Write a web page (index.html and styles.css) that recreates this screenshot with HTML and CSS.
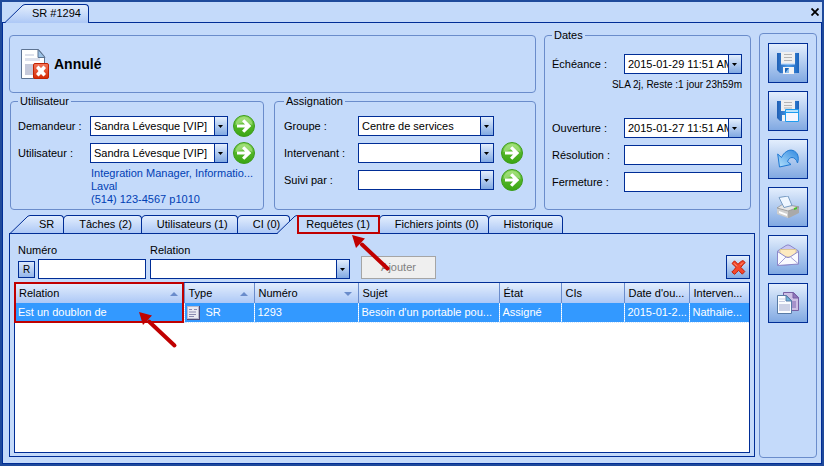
FILE: index.html
```
<!DOCTYPE html>
<html lang="fr">
<head>
    <meta charset="UTF-8">
    <meta name="viewport" content="width=device-width, initial-scale=1.0">
    <title>SR #1294</title>
    <link rel="stylesheet" href="styles.css">
</head>
<body>
    <!-- dégradés et icônes partagés -->
    <svg class="defs" width="0" height="0" aria-hidden="true">
        <defs>
            <linearGradient id="gTab" x1="0" y1="0" x2="0" y2="1">
                <stop offset="0" stop-color="#e3eefd"/>
                <stop offset="1" stop-color="#adc8f6"/>
            </linearGradient>
            <linearGradient id="gGreen" x1="0" y1="0" x2="0" y2="1">
                <stop offset="0" stop-color="#8fd860"/>
                <stop offset="0.5" stop-color="#52b528"/>
                <stop offset="1" stop-color="#3aa512"/>
            </linearGradient>
            <linearGradient id="gRed" x1="0" y1="0" x2="0" y2="1">
                <stop offset="0" stop-color="#f2785c"/>
                <stop offset="1" stop-color="#d52a04"/>
            </linearGradient>
            <linearGradient id="gBlue" x1="0" y1="0" x2="1" y2="0">
                <stop offset="0" stop-color="#1f5fb4"/>
                <stop offset="0.5" stop-color="#4d9be8"/>
                <stop offset="1" stop-color="#1b63bb"/>
            </linearGradient>
            <linearGradient id="gArrow" x1="0" y1="1" x2="1" y2="0">
                <stop offset="0" stop-color="#b5e2fc"/>
                <stop offset="1" stop-color="#3088e0"/>
            </linearGradient>
            <symbol id="go" viewBox="0 0 22 22">
                <circle cx="11" cy="11" r="10.5" fill="url(#gGreen)" stroke="#3c9c1c"/>
                <path d="M2.500 10a8.500 8 0 0 1 17 0q-8-4-17 0z" fill="#b9eb98" opacity="0.55"/>
                <path d="M4 9.500h8L9 6.300 11.300 4.200 18.300 11 11.300 17.800 9 15.700l3-3.200H4z" fill="#fff"/>
            </symbol>
            <symbol id="arrow" viewBox="0 0 40 38">
                <path d="M11 10.500L36.500 34.500" stroke="#c00000" stroke-width="4" stroke-linecap="round"/>
                <path d="M1 1L14 4.500 5 14z" fill="#c00000"/>
            </symbol>
        </defs>
    </svg>

    <div class="window">
        <div class="title">
            <button class="tab active" type="button">
                <svg class="slant" viewBox="0 0 20 19"><path d="M0 19L16 3Q18 .5 20 .5V19z" fill="url(#gTab)"/><path d="M0 18.500L16 3Q18 .5 20 .5" fill="none" stroke="#002d96"/></svg>
                <span>SR #1294</span>
            </button>
            <button class="close" type="button" aria-label="Fermer">
                <svg width="8" height="8" viewBox="0 0 8 8"><path d="M.5.5l7 7M7.500.5l-7 7" stroke="#000" stroke-width="1.800"/></svg>
            </button>
        </div>

        <div class="content">
            <div class="main">
                <div class="form">
                    <div class="left">
                        <div class="status">
                            <svg width="28" height="31" viewBox="0 0 28 31">
                                <path d="M.5.5h17l6 7v22H.5z" fill="#fff" stroke="#5d7391"/>
                                <path d="M17 .5v8h7z" fill="#9cc3e6" stroke="#5d7391"/>
                                <path d="M4 5h9v2H4zM4 9h15v3H4z" fill="#dde1ec"/>
                                <path d="M4 15h8v11H4z" fill="#c6cadb"/>
                                <rect x="12.500" y="14.500" width="15" height="15" rx="1.500" fill="url(#gRed)" stroke="#c22100"/>
                                <path d="M15 19l2.500-2.500L20 19l2.500-2.500L25 19l-2.500 3 2.500 3-2.500 2.500L20 25l-2.500 2.500L15 25l2.500-3z" fill="#fff"/>
                            </svg>
                            <strong>Annulé</strong>
                        </div>
                        <div class="boxes">
                            <fieldset class="box user">
                                <legend>Utilisateur</legend>
                                <div class="fields">
                                    <label for="demandeur">Demandeur :</label>
                                    <select id="demandeur"><option>Sandra Lévesque [VIP]</option></select>
                                    <button class="go" type="button" aria-label="Ouvrir le demandeur"><svg><use href="#go"/></svg></button>
                                    <label for="utilisateur">Utilisateur :</label>
                                    <select id="utilisateur"><option>Sandra Lévesque [VIP]</option></select>
                                    <button class="go" type="button" aria-label="Ouvrir l'utilisateur"><svg><use href="#go"/></svg></button>
                                </div>
                                <div class="contact">
                                    <div>Integration Manager, Informatio...</div>
                                    <div>Laval</div>
                                    <div>(514) 123-4567 p1010</div>
                                </div>
                            </fieldset>
                            <fieldset class="box assign">
                                <legend>Assignation</legend>
                                <div class="fields">
                                    <label for="groupe">Groupe :</label>
                                    <select id="groupe"><option>Centre de services</option></select>
                                    <span></span>
                                    <label for="intervenant">Intervenant :</label>
                                    <select id="intervenant"><option></option></select>
                                    <button class="go" type="button" aria-label="Ouvrir l'intervenant"><svg><use href="#go"/></svg></button>
                                    <label for="suivi">Suivi par :</label>
                                    <select id="suivi"><option></option></select>
                                    <button class="go" type="button" aria-label="Ouvrir le suivi"><svg><use href="#go"/></svg></button>
                                </div>
                            </fieldset>
                        </div>
                    </div>
                    <fieldset class="box dates">
                        <legend>Dates</legend>
                        <div class="fields">
                            <label for="echeance">Échéance :</label>
                            <select id="echeance"><option>2015-01-29 11:51 AM</option></select>
                        </div>
                        <p class="sla">SLA 2j, Reste :1 jour 23h59m</p>
                        <div class="fields">
                            <label for="ouverture">Ouverture :</label>
                            <select id="ouverture"><option>2015-01-27 11:51 AM</option></select>
                            <label for="resolution">Résolution :</label>
                            <input id="resolution" type="text">
                            <label for="fermeture">Fermeture :</label>
                            <input id="fermeture" type="text">
                        </div>
                    </fieldset>
                </div>

                <div class="tabs">
                    <button class="tab first" type="button">
                        <svg class="slant" viewBox="0 0 20 19"><path d="M0 18L16 3Q18 .5 20 .5V18z" fill="url(#gTab)"/><path d="M0 18.500L16 3Q18 .5 20 .5" fill="none" stroke="#002d96"/></svg>
                        <span>SR</span>
                    </button>
                    <button class="tab" type="button"><span>Tâches (2)</span></button>
                    <button class="tab" type="button"><span>Utilisateurs (1)</span></button>
                    <button class="tab" type="button"><span>CI (0)</span></button>
                    <button class="tab active" type="button">
                        <svg class="slant" viewBox="0 0 20 19"><path d="M0 19L16 3Q18 .5 20 .5V19z" fill="#c4dafa"/><path d="M0 18.500L16 3Q18 .5 20 .5" fill="none" stroke="#002d96"/></svg>
                        <span class="marked">Requêtes (1)</span>
                        <svg class="pointer"><use href="#arrow"/></svg>
                    </button>
                    <button class="tab" type="button"><span>Fichiers joints (0)</span></button>
                    <button class="tab" type="button"><span>Historique</span></button>
                </div>

                <div class="panel">
                    <div class="toolbar">
                        <div class="field">
                            <label for="numero">Numéro</label>
                            <div class="number">
                                <button class="small" type="button">R</button>
                                <input id="numero" type="text">
                            </div>
                        </div>
                        <div class="field relation">
                            <label for="relation">Relation</label>
                            <select id="relation"><option></option></select>
                        </div>
                        <button class="add" type="button" disabled>Ajouter</button>
                        <button class="delete" type="button" aria-label="Supprimer">
                            <svg width="15" height="15" viewBox="0 0 15 15"><path d="M1 3.500L3.500.8 7 4.300C8.500 2.500 10 1.200 12 .6L14.200 2.500C12.500 4 11 5.800 9.800 7.300L13.800 11.500 11.300 14.200 7.500 10.300C6.200 12 5 13.300 3.500 14.300L.8 12C2.500 10.500 4 8.800 5 7.300z" fill="#f5482c" stroke="#c02008"/><path d="M3 3.300l3 3M9.500 5L12 2.500" stroke="#ff9a7c"/></svg>
                        </button>
                    </div>
                    <div class="grid">
                        <table>
                            <thead>
                                <tr>
                                    <th class="c-rel up">Relation</th>
                                    <th class="c-type up">Type</th>
                                    <th class="c-num down">Numéro</th>
                                    <th>Sujet</th>
                                    <th class="c-etat">État</th>
                                    <th class="c-cis">CIs</th>
                                    <th class="c-date">Date d'ou...</th>
                                    <th class="c-int">Interven...</th>
                                </tr>
                            </thead>
                            <tbody>
                                <tr>
                                    <td>Est un doublon de</td>
                                    <td class="type"><svg width="13" height="14" viewBox="0 0 13 14"><path d="M0 0h13v14H0z" fill="#4d4b78"/><path d="M0 0h12v13H0z" fill="#b8b8cc"/><path d="M1 1h10v11H1z" fill="#e9e9f2"/><path d="M2 3.500h3M2 6h7M2 8.500h7M2 10.500h5M7 3.500h3" stroke="#8a8ab0"/></svg>SR</td>
                                    <td>1293</td>
                                    <td>Besoin d'un portable pou...</td>
                                    <td>Assigné</td>
                                    <td></td>
                                    <td>2015-01-2...</td>
                                    <td>Nathalie...</td>
                                </tr>
                            </tbody>
                        </table>
                        <div class="frame"></div>
                        <svg class="pointer"><use href="#arrow"/></svg>
                    </div>
                </div>
            </div>

            <div class="sidebar">
                <button type="button" aria-label="Enregistrer">
                    <svg viewBox="0 0 22 22"><path d="M0 1h22v20H3l-3-3z" fill="url(#gBlue)"/><path d="M4 0h14v11H4z" fill="#f0f0f0"/><path d="M7 2.500h8M7 5.500h8M7 8.500h8" stroke="#b4b4b4"/><path d="M4 11h14v1.500H4z" fill="#cfe3fa"/><path d="M6 15h11v7H6z" fill="#f4f4f4"/><path d="M8 16h4v5H8z" fill="#1d65b8"/><path d="M8 21l4-5v5z" fill="#8ec0ee"/></svg>
                </button>
                <button type="button" aria-label="Enregistrer et fermer">
                    <svg viewBox="0 0 22 22"><path d="M0 1h22v20H3l-3-3z" fill="url(#gBlue)"/><path d="M4 0h14v11H4z" fill="#f0f0f0"/><path d="M7 2.500h8M7 5.500h8M7 8h8" stroke="#b4b4b4"/><path d="M5 15h3v6H5z" fill="#f4f4f4"/><path d="M8.500 9.500h13v12h-13z" fill="#f5f6ff" stroke="#1e9cf0"/><path d="M9 10h12v2.500H9z" fill="#b8e2fd"/><path d="M9 12.500h12" stroke="#1e9cf0"/></svg>
                </button>
                <button type="button" aria-label="Annuler">
                    <svg viewBox="0 0 22 22"><path d="M.7 6L4.500 9.500C7 4 12 1 16 2.500c4.500 1.500 6.500 6.500 4.500 12.500-1-3.500-3-5.500-5.500-5.500-2 0-3.500 1.500-4.500 4L14 16.500 2.500 19z" fill="url(#gArrow)" stroke="#1f78d2"/></svg>
                </button>
                <button type="button" aria-label="Imprimer">
                    <svg viewBox="0 0 22 22"><path d="M0 12l5-3 16 1 1 2v5l-10 5L0 18z" fill="#a9a9a9"/><path d="M0 12l6-4 16 3-11 4z" fill="#e6e6e6" stroke="#8c8c8c" stroke-width=".7"/><path d="M0 12.500l11 3v6.500L0 18z" fill="#cfcfcf"/><path d="M2 15l8 3v2l-8-3z" fill="#fff"/><path d="M2 1.500L11 0l4 9.500-8 2z" fill="#eef6ff" stroke="#779bc2"/><path d="M17 12l3-1v2l-3 1z" fill="#46c228"/></svg>
                </button>
                <button type="button" aria-label="Envoyer">
                    <svg viewBox="0 0 22 22"><path d="M.5 7L9 1.500Q11 .3 13 1.500L21.500 7v13L.5 21.500z" fill="#c9c6f1" stroke="#8b88c9"/><path d="M3 5.500h16V13H3z" fill="#fdeac0" stroke="#dcc694"/><path d="M.5 7.500L9 13q2 1 4 0l8.500-5.500V20L.5 21.500z" fill="#fafaff" stroke="#8b88c9"/><path d="M1 21l8-8M21 19.500L13.500 13" stroke="#a3a0d6" fill="none"/></svg>
                </button>
                <button type="button" aria-label="Copier">
                    <svg viewBox="0 0 22 22"><path d="M6.500.5h10l5 5v13h-15z" fill="#cdbfe4" stroke="#775fa3"/><path d="M16 .5v5.500h5.500z" fill="#9277bb" stroke="#775fa3"/><path d="M12 9h7v7h-7z" fill="#a692ca"/><path d="M.5 3.500h9l5 5v13H.5z" fill="#fbfdff" stroke="#587ba6"/><path d="M9 3.500V9h5.500z" fill="#6bb4dc" stroke="#587ba6"/><path d="M2 7h6M2 9.500h6" stroke="#c7cde3"/><path d="M2 12h11v7H2z" fill="#cdd2e6"/></svg>
                </button>
            </div>
        </div>
    </div>
</body>
</html>
```

FILE: styles.css
```
* {
    margin: 0;
    padding: 0;
    box-sizing: border-box;
}

body {
    font-family: "Liberation Sans", Arial, sans-serif;
    font-size: 11px;
    line-height: 13px;
    color: #000;
}

button,
input,
select {
    font: inherit;
    color: inherit;
    border-radius: 0;
}

.defs {
    position: absolute;
}

.window {
    display: flex;
    flex-direction: column;
    min-height: 100vh;
    border: 2px solid #1f4a9b;
    background: #c4dafa;
}

/* barre de titre */
.title {
    display: flex;
    align-items: flex-end;
    height: 20px;
    padding: 0 3px;
}

.close {
    margin: 0 0 6px auto;
    width: 8px;
    height: 8px;
    border: 0;
    background: none;
}

.close svg {
    display: block;
}

/* onglets */
.tab {
    display: flex;
    height: 18px;
    margin-left: -1px;
    border: 0;
    background: none;
    white-space: nowrap;
}

.tab span {
    height: 100%;
    padding: 2px 9px 0 15px;
    border: 1px solid #002d96;
    border-bottom: 0;
    border-radius: 5px 4px 0 0;
    background: linear-gradient(#e3eefd, #adc8f6);
}

.slant {
    flex: none;
    display: block;
    width: 20px;
    height: 19px;
}

.slant + span {
    padding-left: 9px;
    border-left: 0;
    border-top-left-radius: 0;
}

.tab.active {
    position: relative;
    height: 19px;
    margin-bottom: -1px;
}

.title .tab.active {
    margin-left: 0;
}

.title .tab span {
    padding: 2px 7px 0 7px;
}

/* formulaire */
.content {
    flex: 1;
    display: flex;
    gap: 4px;
    padding: 6px 4px 5px 6px;
    border: 1px solid #002d96;
}

.main {
    flex: 1;
    min-width: 0;
    display: flex;
    flex-direction: column;
    padding-bottom: 1px;
}

.form {
    display: grid;
    grid-template-columns: 1fr 207px;
    gap: 8px;
    padding-right: 4px;
}

.status {
    display: flex;
    align-items: center;
    gap: 5px;
    height: 58px;
    margin: 6px 0 2px;
    padding: 0 11px;
    border: 1px solid #6a8ccb;
    border-radius: 4px;
}

.status strong {
    font-size: 14px;
    line-height: 16px;
}

.boxes {
    display: grid;
    grid-template-columns: 254fr 262fr;
    gap: 10px;
    padding-left: 1px;
}

.box {
    min-width: 0;
    border: 1px solid #6a8ccb;
    border-radius: 4px;
}

.box legend {
    padding: 0 2px;
    line-height: 13px;
}

.fields {
    display: grid;
    grid-template-columns: 67px 1fr 22px;
    gap: 5px;
    align-items: center;
}

.fields label {
    white-space: nowrap;
}

.user {
    padding: 7px 8px 3px 7px;
}

.assign {
    padding: 7px 12px 3px 9px;
}

.assign .fields {
    column-gap: 7px;
    grid-auto-rows: 22px;
}

.dates {
    padding: 12px 8px 12px 7px;
}

.dates .fields {
    grid-template-columns: 67px 1fr;
    row-gap: 7px;
}

.sla {
    padding: 4px 0 27px;
    font-size: 10px;
    text-align: right;
    white-space: nowrap;
}

.contact {
    margin: 3px 0 0 73px;
    color: #0040b4;
    white-space: nowrap;
}

select,
input {
    display: block;
    width: 100%;
    min-width: 0;
    height: 20px;
    padding: 0 3px;
    border: 1px solid #002d96;
    background: #fff;
}

select {
    appearance: none;
    padding-right: 13px;
    background: #fff url("data:image/svg+xml,%3Csvg xmlns='http://www.w3.org/2000/svg' width='13' height='18'%3E%3ClinearGradient id='g' x2='0' y2='1'%3E%3Cstop stop-color='%23e3eefd'/%3E%3Cstop offset='1' stop-color='%2381a9e2'/%3E%3C/linearGradient%3E%3Cpath d='M0 0h13v18H0z' fill='url(%23g)'/%3E%3Cpath d='M.5 0v18' stroke='%23002d96'/%3E%3Cpath d='M4 8h5L6.500 11z'/%3E%3C/svg%3E") right center no-repeat;
}

.go {
    width: 22px;
    height: 22px;
    border: 0;
    border-radius: 50%;
    background: none;
}

.go svg {
    display: block;
    width: 22px;
    height: 22px;
}

/* panneau des requêtes */
.tabs {
    display: flex;
    margin-top: 5px;
    padding-left: 1px;
}

.tabs .first {
    margin-left: 0;
}

.tabs .active {
    margin-left: -13px;
}

.tabs .active span {
    background: #c4dafa;
}

.tabs .marked {
    height: 19px;
    padding: 1px 8px 0 7px;
    border: 2px solid #c00000;
    border-radius: 0;
}

.pointer {
    position: absolute;
    z-index: 1;
    width: 40px;
    height: 38px;
    pointer-events: none;
}

.tab .pointer {
    left: 74px;
    top: 19px;
}

.panel {
    flex: 1;
    display: flex;
    flex-direction: column;
    gap: 3px;
    padding: 10px 4px 3px 4px;
    border: 1px solid #002d96;
}

.toolbar {
    display: flex;
    align-items: flex-end;
    gap: 4px;
    padding-left: 4px;
}

.field {
    width: 128px;
}

.field label {
    display: block;
    margin-bottom: 2px;
}

.number {
    display: flex;
    align-items: center;
    gap: 3px;
}

.relation {
    width: 200px;
}

.small {
    flex: none;
    width: 17px;
    height: 17px;
    border: 1px solid #002d96;
    background: linear-gradient(#dbe8fc, #94b6ea);
    font-size: 10px;
}

.add {
    width: 75px;
    height: 23px;
    margin-left: 7px;
    border: 1px solid #a5a5a5;
    background: #efefef;
    color: #808080;
}

.delete {
    display: flex;
    align-items: center;
    justify-content: center;
    width: 24px;
    height: 24px;
    margin-left: auto;
    border: 1px solid #002d96;
    background: linear-gradient(#e3eefd, #81a9e2);
}

.grid {
    position: relative;
    flex: 1;
    min-height: 100px;
    border: 1px solid #002d96;
    background: #fff;
}

table {
    width: 100%;
    table-layout: fixed;
    border-collapse: collapse;
}

th,
td {
    overflow: hidden;
    padding: 0 3px;
    text-align: left;
    white-space: nowrap;
}

th {
    height: 20px;
    padding-left: 4px;
    font-weight: normal;
    background: linear-gradient(#e3eefd, #adc8f6);
    border-left: 1px solid #6a8ccb;
}

td {
    height: 19px;
    background: #3399ff;
    color: #fff;
    border-left: 1px dotted #cfe5ff;
    border-bottom: 1px dotted #cfe5ff;
}

th:first-child,
td:first-child {
    border-left: 0;
}

/* flèches de tri */
.up::after,
.down::after {
    content: "";
    float: right;
    margin: 5px 3px 0 0;
    border: 4px solid transparent;
    border-top-width: 0;
    border-bottom-color: #6a8ccb;
}

.down::after {
    border-width: 4px 4px 0;
    border-color: #6a8ccb transparent transparent;
}

.c-rel { width: 169px; }
.c-type { width: 70px; }
.c-num { width: 104px; }
.c-etat { width: 62px; }
.c-cis { width: 63px; }
.c-date { width: 65px; }
.c-int { width: 60px; }

.type {
    padding-left: 2px;
}

.type svg {
    margin: -2px 6px -2px 0;
    vertical-align: middle;
}

.frame {
    position: absolute;
    left: -1px;
    top: -1px;
    width: 170px;
    height: 41px;
    border: 2px solid #c00000;
}

.grid .pointer {
    left: 123px;
    top: 28px;
}

/* barre d'actions */
.sidebar {
    display: flex;
    flex-direction: column;
    align-items: center;
    gap: 8px;
    width: 58px;
    margin-top: 4px;
    padding-top: 9px;
    border: 1px solid #6a8ccb;
    border-radius: 4px;
}

.sidebar button {
    display: flex;
    align-items: center;
    justify-content: center;
    width: 40px;
    height: 40px;
    border: 1px solid #002d96;
    background: linear-gradient(#e3eefd, #81a9e2);
}

.sidebar svg {
    width: 22px;
    height: 22px;
}
```
